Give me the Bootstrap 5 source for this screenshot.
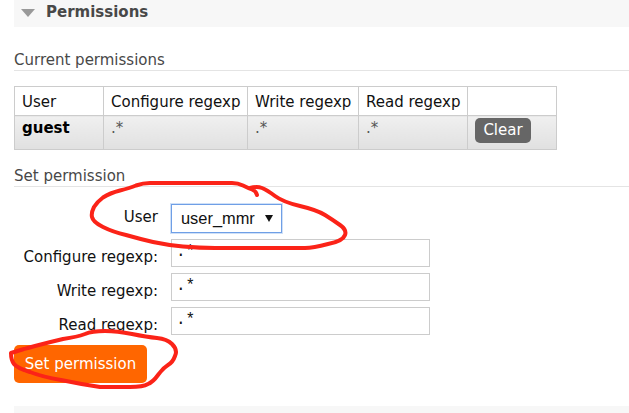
<!DOCTYPE html>
<html lang="en">
<head>
    <meta charset="UTF-8">
    <meta name="viewport" content="width=device-width, initial-scale=1.0">
    <title>Permissions</title>
    <link href="https://cdn.jsdelivr.net/npm/bootstrap@5.3.0/dist/css/bootstrap.min.css" rel="stylesheet">
    <style>
        html, body {
            height: 413px;
            overflow: hidden;
        }

        body {
            background: #fff;
            color: #111;
            font-family: "DejaVu Sans", Verdana, sans-serif;
            font-size: 15px;
            line-height: 18px;
        }

        .page-wrap {
            position: relative;
            height: 413px;
            padding-left: 14px;
        }

        .section-head {
            height: 27px;
            background: #f7f7f7;
            padding-left: 7px;
            padding-bottom: 4px;
            gap: 11px;
            font-size: 15px;
            font-weight: 700;
            color: #484848;
        }

        .section-arrow {
            width: 0;
            height: 0;
            margin-top: 2px;
            border-left: 7px solid transparent;
            border-right: 7px solid transparent;
            border-top: 8px solid #999;
        }

        .sub-head {
            color: #484848;
            font-size: 15px;
            font-weight: 400;
            line-height: 18px;
            margin: 0;
            padding-bottom: 1px;
            border-bottom: 1px solid #e4e4e4;
        }

        .sub-first {
            margin-top: 24px;
        }

        .sub-second {
            margin-top: 17px;
        }

        .perm-table {
            width: 542px;
            margin: 15px 0 0;
            table-layout: fixed;
            border-collapse: collapse;
        }

        .perm-table th,
        .perm-table td {
            border: 1px solid #ccc;
            padding: 6px 7px 4px;
            vertical-align: top;
            font-weight: 400;
            white-space: nowrap;
        }

        .perm-table thead th {
            height: 29px;
            background: #fff;
            color: #111;
        }

        .perm-table tbody th,
        .perm-table tbody td {
            height: 34px;
            padding-top: 3px;
            background: linear-gradient(#f0f0f0, #e0e0e0);
        }

        .perm-table tbody th {
            font-weight: 700;
            color: #000;
        }

        .perm-table tbody td {
            color: #555;
        }

        .perm-table .cell-btn {
            padding: 2px 7px 0;
        }

        .btn-clear {
            width: 56px;
            background: #666;
            color: #fff;
            border: 0;
            border-radius: 5px;
            font-size: 15px;
            line-height: 18px;
            padding: 3px 0 4px;
        }

        .perm-form {
            margin-top: 17px;
        }

        .form-line {
            margin-bottom: 6px;
        }

        .form-tag {
            width: 144px;
            margin: 0;
            padding-top: 8px;
            text-align: right;
            color: #111;
            white-space: nowrap;
        }

        .form-line-user .form-tag {
            padding-top: 0;
            padding-bottom: 3px;
        }

        .form-line input.form-control {
            width: 259px;
            height: 28px;
            margin-left: 13px;
            padding: 0 4px 2px;
            border: 1px solid #ccc;
            border-radius: 0;
            font-family: "Liberation Mono", "Courier New", monospace;
            font-size: 16px;
            color: #111;
        }

        .form-line select.form-select {
            width: 111px;
            height: 29px;
            margin-left: 13px;
            padding: 0 4px 0 9px;
            border: 1px solid #6f9fe6;
            border-radius: 0;
            box-shadow: 0 0 0 1px #cfe0f7;
            font-family: "Liberation Sans", Arial, sans-serif;
            font-size: 16.4px;
            color: #111;
            background-image: url("data:image/svg+xml,%3Csvg xmlns='http://www.w3.org/2000/svg' viewBox='0 0 8 7'%3E%3Cpath d='M0 0h8L4 7z' fill='%23111'/%3E%3C/svg%3E");
            background-position: right 8px center;
            background-size: 8px 7px;
        }

        .btn-orange {
            display: block;
            width: 133px;
            height: 38px;
            margin-top: 10px;
            padding: 0;
            background: #f60;
            color: #fff;
            border: 0;
            border-radius: 5px;
            font-size: 15px;
            line-height: 18px;
        }

        .section-foot {
            position: absolute;
            left: 14px;
            right: 0;
            top: 406px;
            height: 7px;
            background: #f7f7f7;
        }

        .scribble {
            position: absolute;
            left: 0;
            top: 0;
            width: 629px;
            height: 413px;
            pointer-events: none;
        }
    </style>
</head>
<body>

    <div class="page-wrap">
        <div class="section-head d-flex align-items-center">
            <span class="section-arrow"></span>
            <span>Permissions</span>
        </div>

        <h3 class="sub-head sub-first">Current permissions</h3>

        <table class="perm-table">
            <colgroup>
                <col style="width: 89px">
                <col style="width: 144px">
                <col style="width: 111px">
                <col style="width: 109px">
                <col style="width: 89px">
            </colgroup>
            <thead>
                <tr>
                    <th>User</th>
                    <th>Configure regexp</th>
                    <th>Write regexp</th>
                    <th>Read regexp</th>
                    <th></th>
                </tr>
            </thead>
            <tbody>
                <tr>
                    <th>guest</th>
                    <td>.*</td>
                    <td>.*</td>
                    <td>.*</td>
                    <td class="cell-btn"><button type="button" class="btn-clear">Clear</button></td>
                </tr>
            </tbody>
        </table>

        <h3 class="sub-head sub-second">Set permission</h3>

        <form class="perm-form">
            <div class="form-line form-line-user d-flex align-items-center">
                <label class="form-tag" for="permUser">User</label>
                <select class="form-select" id="permUser">
                    <option>user_mmr</option>
                    <option>guest</option>
                </select>
            </div>
            <div class="form-line d-flex align-items-center">
                <label class="form-tag" for="permConfigure">Configure regexp:</label>
                <input type="text" class="form-control" id="permConfigure" value=".*">
            </div>
            <div class="form-line d-flex align-items-center">
                <label class="form-tag" for="permWrite">Write regexp:</label>
                <input type="text" class="form-control" id="permWrite" value=".*">
            </div>
            <div class="form-line d-flex align-items-center">
                <label class="form-tag" for="permRead">Read regexp:</label>
                <input type="text" class="form-control" id="permRead" value=".*">
            </div>
            <button type="submit" class="btn-orange">Set permission</button>
        </form>

        <div class="section-foot"></div>

        <!-- red marker circles drawn over the form -->
        <svg class="scribble" viewBox="0 0 629 413" fill="none" stroke="#fb2318" stroke-width="4" stroke-linecap="round" stroke-linejoin="round">
            <path d="M257 195 Q256 191 252 189.5 Q248 188 243 185.5 Q238 183 232 183 L150 183 Q143 183 136 185.5 Q130 188 120 190.5 Q110 193 103 197.5 Q97 202 94 207 Q91 213 92 217 Q93 222 103 227 Q113 232 126 235 Q140 239 153 242 Q167 245 183 246.5 Q200 248 215 248 L305 248 Q313 248 328 244 Q343 241 345 235 Q347 230 340 225 Q333 220 325 215 Q317 210 300 206 Q283 202 275 196 Q267 190 262 188 Q257 186 250 188"/>
            <path d="M11 353 Q20 350 35 346 Q50 342 63 339 Q77 337 85 334 Q92 331 105 331 Q117 331 132 334 Q147 337 157 338 Q167 339 172 344 Q178 350 175 356 Q173 362 168 365 Q163 368 158 375 Q153 382 148 384 Q143 387 130 387 L100 387 Q80 384 61 380 Q43 377 30 372 Q17 368 14 364 Q11 360 11 353 Z"/>
        </svg>
    </div>

    <script src="https://cdn.jsdelivr.net/npm/bootstrap@5.3.0/dist/js/bootstrap.bundle.min.js"></script>
</body>
</html>
